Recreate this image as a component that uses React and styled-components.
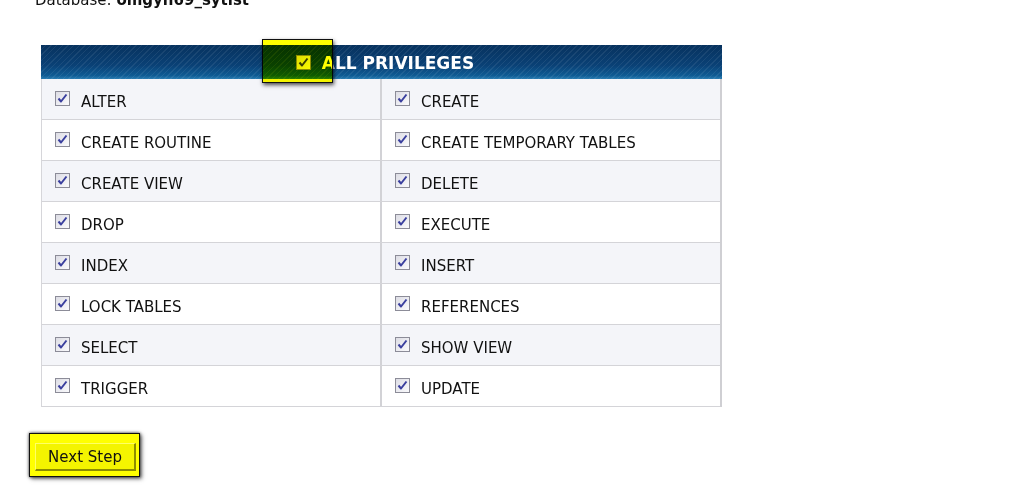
import React from 'react';
import styled, { createGlobalStyle } from 'styled-components';

const Global = createGlobalStyle`
  html, body {
    margin: 0;
    padding: 0;
    background: #fff;
    overflow: hidden;
  }
  body {
    font-family: "DejaVu Sans", Verdana, sans-serif;
    color: #111;
  }
`;

const Page = styled.div`
  width: 1024px;
  height: 500px;
  padding-left: 29px;
  box-sizing: border-box;
`;

const DbLine = styled.div`
  margin-top: -9px;
  padding-left: 6px;
  font-size: 15px;
  line-height: 18px;
  b {
    font-weight: bold;
  }
`;

const Table = styled.div`
  position: relative;
  margin: 36px 0 0 12px;
  width: 681px;
  border-left: 1px solid #d6d6da;
  border-right: 2px solid #cfcfd3;
  box-sizing: border-box;
`;

const Header = styled.div`
  height: 34px;
  display: flex;
  align-items: center;
  justify-content: center;
  gap: 11px;
  padding: 1px 0 0 7px;
  box-sizing: border-box;
  color: #fff;
  font-weight: bold;
  font-size: 17px;
  background:
    repeating-linear-gradient(135deg, rgba(255,255,255,0) 0 3px, rgba(255,255,255,0.07) 3px 4px),
    linear-gradient(#07325e 0%, #0a4176 60%, #0f5c94 90%, #2a7db2 100%);
  margin: 0 -2px 0 -1px;
`;

const Highlight = styled.div`
  position: absolute;
  left: 220px;
  top: -6px;
  width: 71px;
  height: 44px;
  box-sizing: border-box;
  background: #ffff00;
  border: 1px solid #111;
  mix-blend-mode: multiply;
  box-shadow: 1px 2px 4px rgba(0, 0, 0, 0.7);
`;

const Row = styled.div`
  display: grid;
  grid-template-columns: 340px 1fr;
  height: 41px;
  border-bottom: 1px solid #d4d4d8;
  box-sizing: border-box;
  background: ${({ shaded }) => (shaded ? '#f4f5f9' : '#ffffff')};
`;

const Cell = styled.div`
  display: flex;
  align-items: center;
  gap: 11px;
  padding: 0 0 0 13px;
  font-size: 15px;
  border-right: ${({ first }) => (first ? '2px solid #d2d2d6' : 'none')};
  svg {
    margin-top: -2px;
  }
`;

const Label = styled.span`
  padding-top: 5px;
`;

const ButtonFrame = styled.div`
  margin-top: 26px;
  width: 111px;
  height: 44px;
  box-sizing: border-box;
  background: #ffff00;
  border: 1px solid #111;
  box-shadow: 0 0 3px rgba(0, 0, 0, 0.8), 2px 2px 4px rgba(0, 0, 0, 0.5);
  padding: 9px 3px 5px 5px;
`;

const NextButton = styled.div`
  height: 100%;
  box-sizing: border-box;
  display: flex;
  align-items: center;
  justify-content: center;
  font-size: 15px;
  color: #111;
  background: #f4f400;
  border-top: 1px solid #ffff66;
  border-left: 1px solid #ffff66;
  border-right: 2px solid #8d8d00;
  border-bottom: 2px solid #8d8d00;
  padding-top: 1px;
`;

const CheckBox = ({ size = 15 }) => (
  <svg width={size} height={size} viewBox="0 0 15 15">
    <defs>
      <linearGradient id="cbg" x1="0" y1="0" x2="1" y2="1">
        <stop offset="0" stopColor="#dcdce4" />
        <stop offset="1" stopColor="#fbfbfd" />
      </linearGradient>
    </defs>
    <rect x="0.5" y="0.5" width="14" height="14" fill="url(#cbg)" stroke="#8c8c98" />
    <path d="M3.5 7.5 L6 10.5 L11.5 3.5" fill="none" stroke="#3a3f9e" strokeWidth="2" strokeLinejoin="round" />
  </svg>
);

const privileges = [
  ['ALTER', 'CREATE'],
  ['CREATE ROUTINE', 'CREATE TEMPORARY TABLES'],
  ['CREATE VIEW', 'DELETE'],
  ['DROP', 'EXECUTE'],
  ['INDEX', 'INSERT'],
  ['LOCK TABLES', 'REFERENCES'],
  ['SELECT', 'SHOW VIEW'],
  ['TRIGGER', 'UPDATE'],
];

export default function App() {
  return (
    <Page>
      <Global />
      <DbLine>
        Database: <b>omgyn69_sytist</b>
      </DbLine>
      <Table>
        <Header>
          <CheckBox />
          <span>ALL PRIVILEGES</span>
        </Header>
        {privileges.map(([a, b], i) => (
          <Row key={a} shaded={i % 2 === 0}>
            <Cell first>
              <CheckBox />
              <Label>{a}</Label>
            </Cell>
            <Cell>
              <CheckBox />
              <Label>{b}</Label>
            </Cell>
          </Row>
        ))}
        <Highlight />
      </Table>
      <ButtonFrame>
        <NextButton>Next Step</NextButton>
      </ButtonFrame>
    </Page>
  );
}
